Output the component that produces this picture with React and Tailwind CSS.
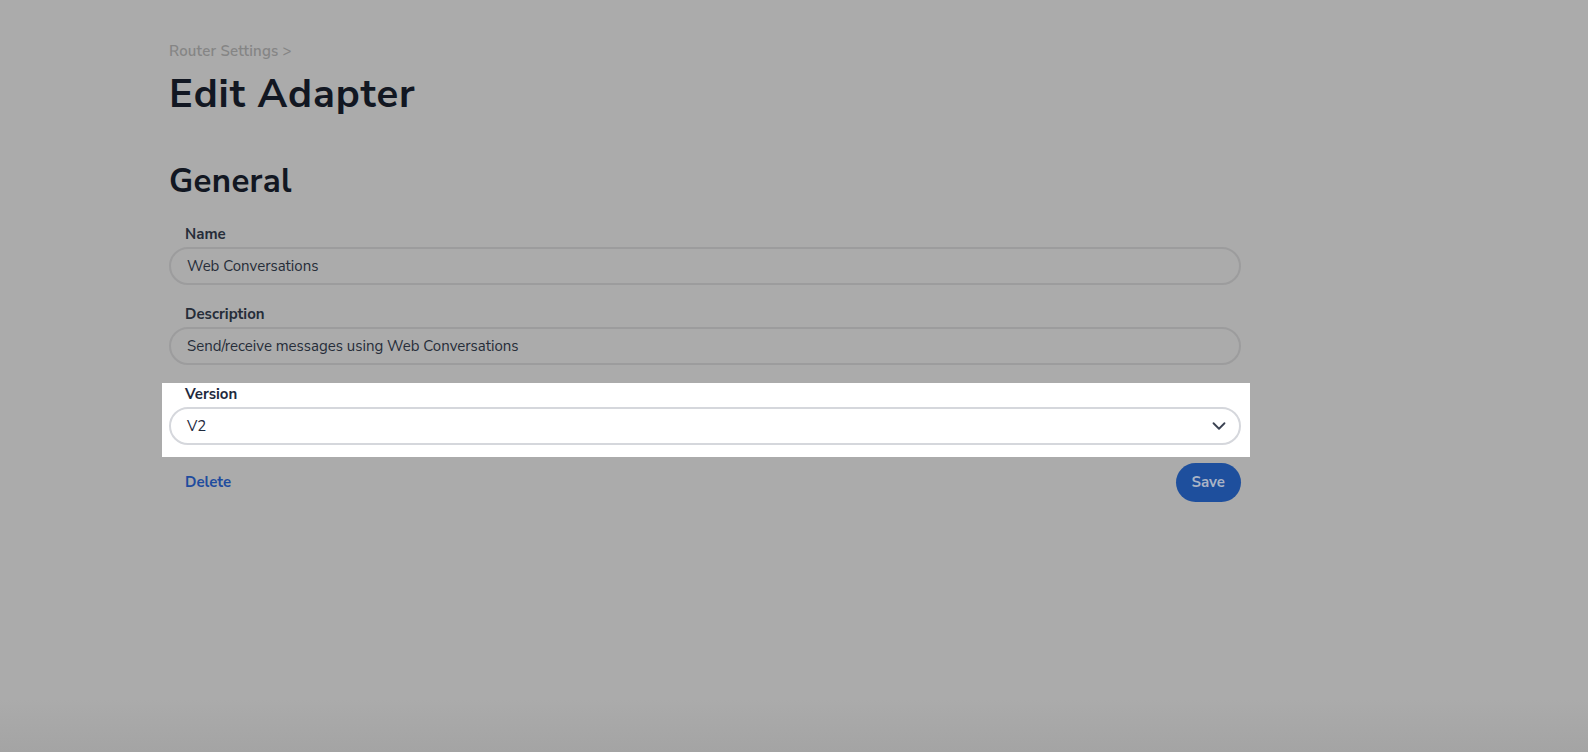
import { ChevronDown } from 'lucide-react';

const font = { fontFamily: '"Nunito Sans", Lato, "Open Sans", sans-serif' };

function Field({ label, value }) {
  return (
    <div className="flex flex-col">
      <label className="text-[15px] font-bold text-[#262d39] pl-4 h-[21px] leading-[21px]">{label}</label>
      <div className="mt-[2px] h-[38px] rounded-full border-2 border-[#9c9c9d] flex items-center px-4 text-[15px] text-[#262d39]">
        {value}
      </div>
    </div>
  );
}

export default function App() {
  return (
    <div
      className="w-full h-[752px] bg-[linear-gradient(to_bottom,#ababab_0%,#ababab_93%,#a4a4a4_100%)] overflow-hidden"
      style={font}
    >
      <div className="pl-[169px] w-[1241px] pt-[42px]">
        <p className="text-[15px] font-semibold text-[#858585] leading-[18px] tracking-[0.2px]">Router Settings &gt;</p>
        <h1 className="mt-[11px] text-[40px] leading-[46px] font-bold text-[#121722] tracking-[0.9px]">Edit Adapter</h1>

        <h2 className="mt-[45px] text-[33px] leading-[40px] font-bold text-[#121722] tracking-[0.3px]">General</h2>

        <div className="mt-[22px] flex flex-col gap-[19px]">
          <Field label="Name" value="Web Conversations" />
          <Field label="Description" value="Send/receive messages using Web Conversations" />
        </div>

        <div className="mt-[18px] -ml-[7px] -mr-[9px] pl-[7px] pr-[9px] pt-[1px] pb-[12px] bg-white flex flex-col">
          <label className="text-[15px] font-bold text-[#1f2a3d] pl-4 h-[21px] leading-[21px]">Version</label>
          <div className="mt-[2px] h-[38px] rounded-full border-2 border-[#d5d7dc] flex items-center justify-between pl-4 pr-[9px] text-[15px] text-[#1f2a3d]">
            <span>V2</span>
            <ChevronDown size={22} strokeWidth={2} className="text-[#3b4252]" />
          </div>
        </div>

        <div className="mt-[6px] flex items-center justify-between">
          <button className="pl-4 text-[15px] font-bold text-[#1f4c9e]">Delete</button>
          <button className="h-[39px] px-[16px] rounded-full bg-[#1e4f9d] text-[15px] font-bold text-[#aab4c6]">Save</button>
        </div>
      </div>
    </div>
  );
}
